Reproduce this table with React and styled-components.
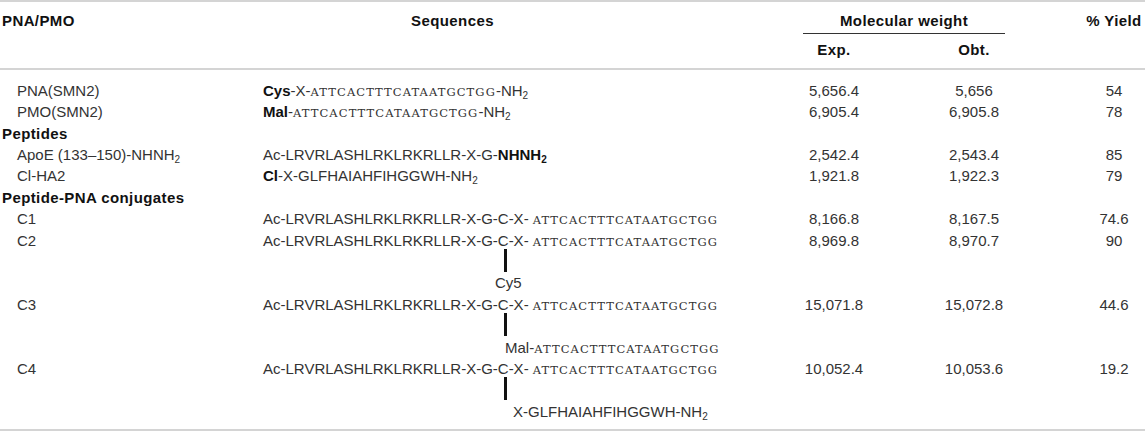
import React from 'react';
import styled, { createGlobalStyle } from 'styled-components';

const Global = createGlobalStyle`
  html, body { margin: 0; padding: 0; background: #fff; }
  body { font-family: "Liberation Sans", Arial, Helvetica, sans-serif; }
`;

const COLS = '263px 501px 140px 140px 101px';

const Table = styled.div`
  width: 1145px;
  border-top: 2px solid #d4d4d4;
  border-bottom: 2px solid #d4d4d4;
  font-size: 15px;
  line-height: 21.4px;
  color: #333;
`;

const Head = styled.div`
  display: grid;
  grid-template-columns: ${COLS};
  padding: 8px 0 7px;
  border-bottom: 2px solid #d4d4d4;
  font-weight: bold;
  color: #111;
  letter-spacing: 0.4px;
`;

const HeadCell = styled.div`
  grid-column: ${(p) => p.$col};
  grid-row: ${(p) => p.$row || 1};
  text-align: ${(p) => p.$align || 'center'};
  padding: ${(p) => p.$pad || '0'};
`;

const Span = styled.div`
  grid-column: 3 / 5;
  grid-row: 1;
  margin: 0 39px;
  padding-bottom: 2px;
  border-bottom: 1px solid #333;
  text-align: center;
`;

const Body = styled.div`
  padding: 10px 0 7px;
`;

const Row = styled.div`
  display: grid;
  grid-template-columns: ${COLS};
  align-items: start;
`;

const Group = styled.div`
  height: 21.4px;
  padding-left: 2px;
  font-weight: bold;
  color: #111;
  letter-spacing: 0.4px;
`;

const Line = styled.div`
  height: 21.4px;
  white-space: nowrap;
`;

const Label = styled(Line)`
  padding-left: 17px;
`;

const Seq = styled.div`
  white-space: nowrap;
`;

const Num = styled(Line)`
  text-align: center;
  padding-left: ${(p) => (p.$yield ? '39px' : '0')};
`;

const Nuc = styled.span`
  font-family: "DejaVu Serif", "Liberation Serif", serif;
  font-size: 11.5px;
  line-height: 10px;
  letter-spacing: 1.08px;
  margin-left: ${(p) => (p.$gap ? '4px' : '0')};
`;

const B = styled.b`
  color: #111;
`;

const Sub = styled.sub`
  font-size: 10px;
  line-height: 0;
  vertical-align: -3px;
`;

const Stem = styled.div`
  height: 21.4px;
  position: relative;
  &::after {
    content: '';
    position: absolute;
    left: ${(p) => p.$x}px;
    top: -2px;
    width: 3px;
    height: 23px;
    background: #111;
  }
`;

const BranchLabel = styled(Line)`
  padding-left: ${(p) => p.$x}px;
`;

const NUC = 'ATTCACTTTCATAATGCTGG';
const PEP = 'Ac-LRVRLASHLRKLRKRLLR-X-G-C-X-';

const NH2 = () => (
  <>
    -NH<Sub>2</Sub>
  </>
);

const Conj = ({ branch, bx }) => (
  <Seq>
    <Line>
      {PEP}
      <Nuc $gap>{NUC}</Nuc>
    </Line>
    {branch && (
      <>
        <Stem $x={241} />
        <BranchLabel $x={bx}>{branch}</BranchLabel>
      </>
    )}
  </Seq>
);

const DataRow = ({ label, seq, exp, obt, yld }) => (
  <Row>
    <Label>{label}</Label>
    {seq}
    <Num>{exp}</Num>
    <Num>{obt}</Num>
    <Num $yield>{yld}</Num>
  </Row>
);

export default function App() {
  return (
    <>
      <Global />
      <Table>
        <Head>
          <HeadCell $col={1} $align="left" $pad="0 0 0 2px">PNA/PMO</HeadCell>
          <HeadCell $col={2} $pad="0 122px 0 0">Sequences</HeadCell>
          <Span>Molecular weight</Span>
          <HeadCell $col={5} $pad="0 0 0 39px">% Yield</HeadCell>
          <HeadCell $col={3} $row={2} $pad="5px 0 0">Exp.</HeadCell>
          <HeadCell $col={4} $row={2} $pad="5px 0 0">Obt.</HeadCell>
        </Head>
        <Body>
          <DataRow
            label="PNA(SMN2)"
            seq={
              <Line>
                <B>Cys</B>-X-<Nuc>{NUC}</Nuc>
                <NH2 />
              </Line>
            }
            exp="5,656.4"
            obt="5,656"
            yld="54"
          />
          <DataRow
            label="PMO(SMN2)"
            seq={
              <Line>
                <B>Mal</B>-<Nuc>{NUC}</Nuc>
                <NH2 />
              </Line>
            }
            exp="6,905.4"
            obt="6,905.8"
            yld="78"
          />
          <Group>Peptides</Group>
          <DataRow
            label={
              <>
                ApoE (133–150)-NHNH<Sub>2</Sub>
              </>
            }
            seq={
              <Line>
                Ac-LRVRLASHLRKLRKRLLR-X-G-
                <B>
                  NHNH<Sub>2</Sub>
                </B>
              </Line>
            }
            exp="2,542.4"
            obt="2,543.4"
            yld="85"
          />
          <DataRow
            label="Cl-HA2"
            seq={
              <Line>
                <B>Cl</B>-X-GLFHAIAHFIHGGWH
                <NH2 />
              </Line>
            }
            exp="1,921.8"
            obt="1,922.3"
            yld="79"
          />
          <Group>Peptide-PNA conjugates</Group>
          <DataRow label="C1" seq={<Conj />} exp="8,166.8" obt="8,167.5" yld="74.6" />
          <DataRow label="C2" seq={<Conj branch="Cy5" bx={232} />} exp="8,969.8" obt="8,970.7" yld="90" />
          <DataRow
            label="C3"
            seq={
              <Conj
                bx={242}
                branch={
                  <>
                    Mal-<Nuc>{NUC}</Nuc>
                  </>
                }
              />
            }
            exp="15,071.8"
            obt="15,072.8"
            yld="44.6"
          />
          <DataRow
            label="C4"
            seq={
              <Conj
                bx={250}
                branch={
                  <>
                    X-GLFHAIAHFIHGGWH
                    <NH2 />
                  </>
                }
              />
            }
            exp="10,052.4"
            obt="10,053.6"
            yld="19.2"
          />
        </Body>
      </Table>
    </>
  );
}
